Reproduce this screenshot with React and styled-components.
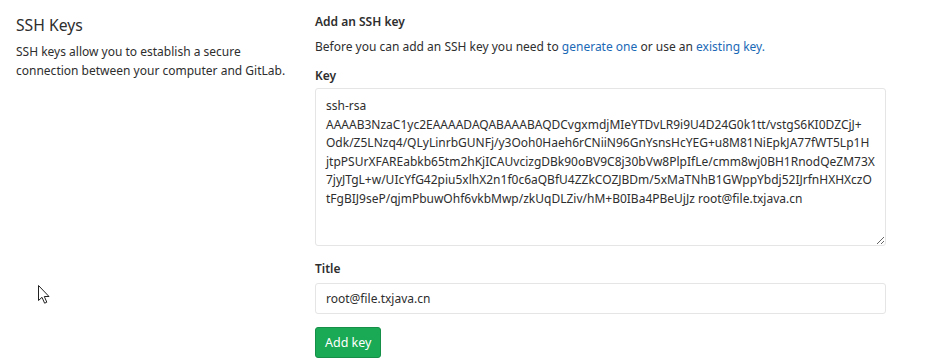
import styled, { createGlobalStyle } from "styled-components";

const GlobalStyle = createGlobalStyle`
  html, body {
    margin: 0;
    padding: 0;
    background: #fff;
  }
  body {
    font-family: "Noto Sans", "Open Sans", sans-serif;
    font-size: 12px;
    color: #2e2e2e;
  }
`;

const keyLines = [
  "ssh-rsa",
  "AAAAB3NzaC1yc2EAAAADAQABAAABAQDCvgxmdjMIeYTDvLR9i9U4D24G0k1tt/vstgS6KI0DZCjJ+",
  "Odk/Z5LNzq4/QLyLinrbGUNFj/y3Ooh0Haeh6rCNiiN96GnYsnsHcYEG+u8M81NiEpkJA77fWT5Lp1H",
  "jtpPSUrXFAREabkb65tm2hKjICAUvcizgDBk90oBV9C8j30bVw8PlpIfLe/cmm8wj0BH1RnodQeZM73X",
  "7jyJTgL+w/UIcYfG42piu5xlhX2n1f0c6aQBfU4ZZkCOZJBDm/5xMaTNhB1GWppYbdj52IJrfnHXHXczO",
  "tFgBIJ9seP/qjmPbuwOhf6vkbMwp/zkUqDLZiv/hM+B0IBa4PBeUjJz root@file.txjava.cn",
];

function SshKeysPage() {
  return (
    <>
      <GlobalStyle />
      <Row>
        <Aside>
          <Heading>SSH Keys</Heading>
          <Lead>SSH keys allow you to establish a secure connection between your computer and GitLab.</Lead>
          <Pointer width="12" height="19" viewBox="0 0 12 19">
            <path
              d="M0.5 0.5 L0.5 15.5 L4 12.3 L6.6 18.2 L8.8 17.2 L6.3 11.5 L11 11.5 Z"
              fill="#fff"
              stroke="#222"
              strokeWidth="1"
              strokeLinejoin="round"
            />
          </Pointer>
        </Aside>
        <Main>
          <SubHeading>Add an SSH key</SubHeading>
          <Intro>
            Before you can add an SSH key you need to <Link href="#">generate one</Link> or use an{" "}
            <Link href="#">existing key.</Link>
          </Intro>
          <Field>
            <Label>Key</Label>
            <KeyArea readOnly value={keyLines.join("\n")} />
          </Field>
          <Field>
            <Label>Title</Label>
            <TextInput readOnly value="root@file.txjava.cn" />
          </Field>
          <Submit type="button">Add key</Submit>
        </Main>
      </Row>
    </>
  );
}

const Row = styled.div`
  display: grid;
  grid-template-columns: 284px 571px;
  column-gap: 15px;
  padding: 12px 16px 0;
`;

const Aside = styled.div`
  position: relative;
  padding-top: 1px;
`;

const Pointer = styled.svg`
  position: absolute;
  left: 22px;
  top: 273px;
`;

const Heading = styled.h4`
  margin: 0 0 5px;
  font-size: 15.7px;
  font-weight: 400;
  line-height: 24px;
  color: #2e2e2e;
`;

const Lead = styled.p`
  margin: 0;
  line-height: 19px;
  color: #2e2e2e;
`;

const Main = styled.div`
  display: flex;
  flex-direction: column;
  align-items: flex-start;
`;

const SubHeading = styled.h5`
  margin: 0 0 5px;
  font-size: 12px;
  font-weight: 600;
  line-height: 20px;
`;

const Intro = styled.p`
  margin: 0 0 9px;
  line-height: 20px;
`;

const Link = styled.a`
  color: #1b69b6;
  text-decoration: none;
`;

const Field = styled.div`
  display: flex;
  flex-direction: column;
  width: 100%;
  margin-bottom: 13px;
`;

const Label = styled.label`
  font-weight: 600;
  line-height: 20px;
  margin-bottom: ${(p) => (p.$tight ? 2 : 4)}px;
`;

const inputBase = `
  box-sizing: border-box;
  width: 100%;
  font-family: "Noto Sans", "Open Sans", sans-serif;
  font-size: 12px;
  color: #2e2e2e;
  border: 1px solid #e5e5e5;
  border-radius: 3px;
  background: #fff;
  outline: none;
`;

const KeyArea = styled.textarea`
  ${inputBase}
  height: 158px;
  margin-top: -2px;
  padding: 8px 10px 4px;
  line-height: 18.6px;
  white-space: pre;
  overflow: hidden;
  resize: vertical;
`;

const TextInput = styled.input`
  ${inputBase}
  height: 31px;
  padding: 4px 10px;
`;

const Submit = styled.button`
  font-family: "Noto Sans", "Open Sans", sans-serif;
  font-size: 12.5px;
  color: #fff;
  background: #1aaa55;
  border: 1px solid #168f48;
  border-radius: 3px;
  padding: 0 9px;
  height: 31px;
  margin-top: 0;
`;

export default SshKeysPage;
